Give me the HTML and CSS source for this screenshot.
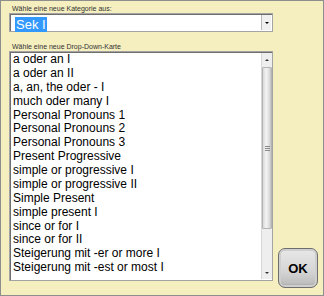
FILE: index.html
```html
<!DOCTYPE html>
<html>
<head>
<meta charset="utf-8">
<link rel="stylesheet" href="styles.css">
</head>
<body>
<div class="frame">
  <div class="label label-top">Wähle eine neue Kategorie aus:</div>
  <div class="select">
    <div class="select-value"><span class="sel">Sek I</span></div>
    <div class="select-btn"><span class="tri-down"></span></div>
  </div>
  <div class="label label-list">Wähle eine neue Drop-Down-Karte</div>
  <div class="row">
    <div class="listbox">
      <ul class="items">
        <li>a oder an I</li>
        <li>a oder an II</li>
        <li>a, an, the oder - I</li>
        <li>much oder many I</li>
        <li>Personal Pronouns 1</li>
        <li>Personal Pronouns 2</li>
        <li>Personal Pronouns 3</li>
        <li>Present Progressive</li>
        <li>simple or progressive I</li>
        <li>simple or progressive II</li>
        <li>Simple Present</li>
        <li>simple present I</li>
        <li>since or for I</li>
        <li>since or for II</li>
        <li>Steigerung mit -er or more I</li>
        <li>Steigerung mit -est or most I</li>
      </ul>
      <div class="scrollbar">
        <div class="sb-btn"><span class="tri-up-s"></span></div>
        <div class="sb-track">
          <div class="sb-thumb"><span class="grip"></span></div>
        </div>
        <div class="sb-btn"><span class="tri-down-s"></span></div>
      </div>
    </div>
    <button class="ok">OK</button>
  </div>
</div>
</body>
</html>
```
FILE: styles.css
```css
html, body {
  margin: 0;
  padding: 0;
}
body {
  width: 324px;
  height: 296px;
  font-family: "Liberation Sans", Arial, sans-serif;
}
.frame {
  box-sizing: border-box;
  width: 324px;
  height: 296px;
  border: 1px solid #8e8e8e;
  background: #f5eebf;
  display: flex;
  flex-direction: column;
}
.label {
  font-size: 7px;
  line-height: 9px;
  color: #333;
  padding-left: 11px;
  white-space: nowrap;
}
.label-top {
  margin-top: 3px;
}
.select {
  box-sizing: border-box;
  margin-left: 8px;
  width: 264px;
  height: 19px;
  background: #fff;
  border: 1px solid #a3a3a3;
  box-shadow: inset 1px 1px 0 #6e6e6e;
  display: flex;
  align-items: stretch;
}
.select-value {
  flex: 1;
  padding: 1px 0 0 5px;
}
.sel {
  display: inline-block;
  background: #3399ff;
  color: #fff;
  font-size: 13px;
  line-height: 15px;
  padding: 0 1px;
}
.select-btn {
  width: 9px;
  margin: 1px 1px 1px 0;
  background: #f0f0f0;
  border-left: 1px solid #b8b8b8;
  display: flex;
  align-items: center;
  justify-content: center;
}
.tri-down {
  width: 0;
  height: 0;
  border-left: 2px solid transparent;
  border-right: 2px solid transparent;
  border-top: 2px solid #000;
}
.label-list {
  margin-top: 10px;
  margin-bottom: 0;
}
.row {
  display: flex;
  align-items: flex-start;
  margin-left: 8px;
  gap: 5px;
}
.listbox {
  box-sizing: border-box;
  width: 264px;
  height: 230px;
  background: #fff;
  border: 1px solid #a3a3a3;
  box-shadow: inset 1px 1px 0 #6e6e6e;
  display: flex;
  overflow: hidden;
}
.items {
  list-style: none;
  margin: 0;
  padding: 1px 0 0 3px;
  flex: 1;
  font-size: 12px;
  line-height: 13.87px;
  color: #000;
  white-space: nowrap;
  overflow: hidden;
}
.scrollbar {
  width: 10px;
  margin: 1px 0 1px 0;
  background: #eeeeee;
  border-left: 1px solid #d6d6d6;
  display: flex;
  flex-direction: column;
}
.sb-btn {
  height: 13px;
  display: flex;
  align-items: center;
  justify-content: center;
}
.tri-up-s {
  width: 0;
  height: 0;
  border-left: 2px solid transparent;
  border-right: 2px solid transparent;
  border-bottom: 2px solid #333;
}
.tri-down-s {
  width: 0;
  height: 0;
  border-left: 2px solid transparent;
  border-right: 2px solid transparent;
  border-top: 2px solid #333;
}
.sb-track {
  flex: 1;
  padding-top: 1px;
}
.sb-thumb {
  box-sizing: border-box;
  height: 162px;
  margin: 0 0 0 0;
  border: 1px solid #b4b4b4;
  border-radius: 1px;
  background: linear-gradient(to right, #d8d8d8, #f4f4f4 40%, #e2e2e2 70%, #c4c4c4);
  display: flex;
  align-items: center;
  justify-content: center;
}
.grip {
  width: 5px;
  height: 5px;
  background: repeating-linear-gradient(to bottom, #8a8a8a 0 1px, transparent 1px 2px);
}
.ok {
  margin-top: 197px;
  box-sizing: border-box;
  width: 40px;
  height: 40px;
  border: 1px solid #6e6e6e;
  border-radius: 7px;
  background: linear-gradient(to bottom, #e8e8e8, #d4d4d4 60%, #b8b8b8);
  box-shadow: inset 0 0 0 2px #cfcfcf, inset 0 -2px 2px #9a9a9a;
  font-family: "Liberation Sans", Arial, sans-serif;
  font-weight: bold;
  font-size: 13px;
  color: #000;
  padding: 0;
}
```
